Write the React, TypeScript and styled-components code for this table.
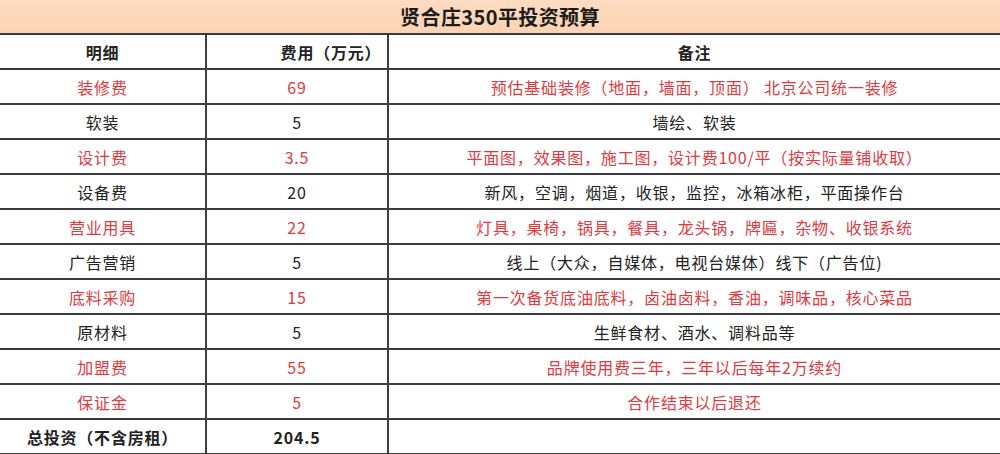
import React from "react";
import styled, { createGlobalStyle } from "styled-components";

const Global = createGlobalStyle`
  html, body { margin: 0; padding: 0; background: #ffffff; }
  body { font-family: "Noto Sans CJK SC", "Noto Sans", sans-serif; }
`;

const Sheet = styled.div`
  width: 1000px;
  height: 454px;
  overflow: hidden;
  background: #fff;
`;

const TitleBar = styled.div`
  height: 33px;
  border-bottom: 2px solid #3c3c3c;
  background: linear-gradient(#fddcc2, #fcd3b3);
  display: flex;
  align-items: center;
  justify-content: center;
  font-size: 20px;
  font-weight: 700;
  letter-spacing: 0.4px;
  color: #1c1c1c;
  line-height: 1;
`;

const Grid = styled.div`
  display: grid;
  grid-template-columns: 207px 182px 1fr;
  grid-auto-rows: 35px;
`;

const Cell = styled.div<{ $red?: boolean; $bold?: boolean; $last?: boolean; $shift?: number }>`
  box-sizing: border-box;
  display: flex;
  align-items: center;
  justify-content: center;
  border-bottom: 2px solid #3c3c3c;
  border-right: ${(p) => (p.$last ? "none" : "2px solid #3c3c3c")};
  padding-left: ${(p) => p.$shift ?? 0}px;
  padding-top: 1px;
  font-size: 16px;
  line-height: 1;
  letter-spacing: 0.8px;
  white-space: nowrap;
  font-weight: ${(p) => (p.$bold ? 700 : 400)};
  color: ${(p) => (p.$red ? "#e03a40" : "#222222")};
`;

type Row = { name: string; cost: string; note: string; red: boolean };

const rows: Row[] = [
  { name: "装修费", cost: "69", note: "预估基础装修（地面，墙面，顶面） 北京公司统一装修", red: true },
  { name: "软装", cost: "5", note: "墙绘、软装", red: false },
  { name: "设计费", cost: "3.5", note: "平面图，效果图，施工图，设计费100/平（按实际量铺收取）", red: true },
  { name: "设备费", cost: "20", note: "新风，空调，烟道，收银，监控，冰箱冰柜，平面操作台", red: false },
  { name: "营业用具", cost: "22", note: "灯具，桌椅，锅具，餐具，龙头锅，牌匾，杂物、收银系统", red: true },
  { name: "广告营销", cost: "5", note: "线上（大众，自媒体，电视台媒体）线下（广告位)", red: false },
  { name: "底料采购", cost: "15", note: "第一次备货底油底料，卤油卤料，香油，调味品，核心菜品", red: true },
  { name: "原材料", cost: "5", note: "生鲜食材、酒水、调料品等", red: false },
  { name: "加盟费", cost: "55", note: "品牌使用费三年，三年以后每年2万续约", red: true },
  { name: "保证金", cost: "5", note: "合作结束以后退还", red: true },
];

export default function App() {
  return (
    <Sheet>
      <Global />
      <TitleBar>贤合庄350平投资预算</TitleBar>
      <Grid>
        <Cell $bold>明细</Cell>
        <Cell $bold $shift={68}>费用（万元）</Cell>
        <Cell $bold $last>备注</Cell>
        {rows.map((r) => (
          <React.Fragment key={r.name}>
            <Cell $red={r.red}>{r.name}</Cell>
            <Cell $red={r.red}>{r.cost}</Cell>
            <Cell $red={r.red} $last>{r.note}</Cell>
          </React.Fragment>
        ))}
        <Cell $bold>总投资（不含房租）</Cell>
        <Cell $bold>204.5</Cell>
        <Cell $last />
      </Grid>
    </Sheet>
  );
}
